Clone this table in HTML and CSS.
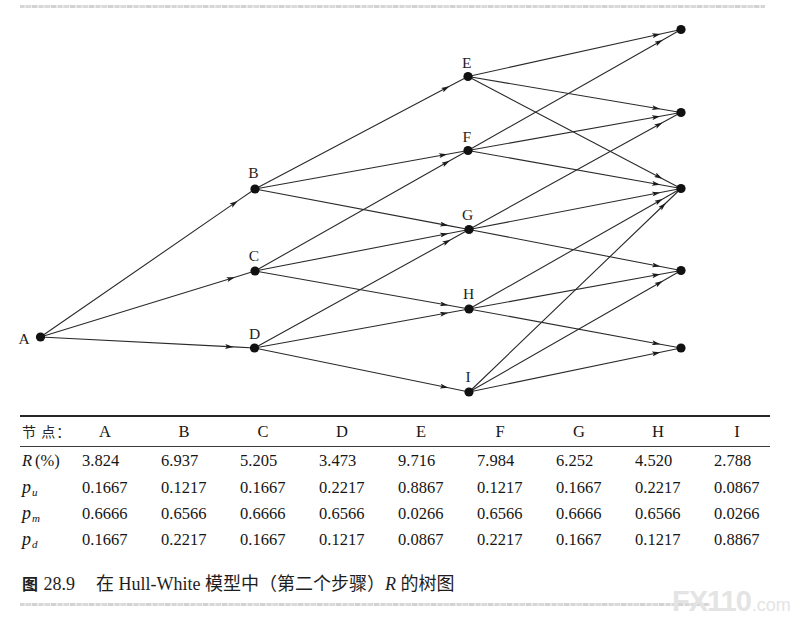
FILE: index.html
```html
<!DOCTYPE html>
<html lang="zh">
<head>
<meta charset="utf-8">
<title>Hull-White 树图</title>
<link rel="stylesheet" href="styles.css">
</head>
<body>
<div class="page">
  <div class="scan scan-top"></div>
  <svg class="tree" viewBox="0 8 809 400" width="809" height="400" xmlns="http://www.w3.org/2000/svg">
    <defs>
      <marker id="ah" viewBox="0 0 10 6" refX="10" refY="3" markerWidth="10" markerHeight="5" markerUnits="userSpaceOnUse" orient="auto">
        <path d="M0,0 L10,3 L0,6 L2.2,3 Z" fill="#1c1c1c"/>
      </marker>
    </defs>
    <g class="edges">
      <polyline points="40.5,337 237.7,200.9 255,189"/>
      <polyline points="40.5,337 234.9,277.2 255,271"/>
      <polyline points="40.5,337 233.5,346.9 254.5,348"/>
      <polyline points="255,189 449.4,86.3 468,76.5"/>
      <polyline points="255,189 447.3,154.2 468,150.5"/>
      <polyline points="255,189 448.4,225.6 469,229.5"/>
      <polyline points="255,271 449.7,160.8 468,150.5"/>
      <polyline points="255,271 448.4,233.5 469,229.5"/>
      <polyline points="255,271 448.3,305.3 469,309"/>
      <polyline points="254.5,348 450.6,239.7 469,229.5"/>
      <polyline points="254.5,348 448.3,312.8 469,309"/>
      <polyline points="254.5,348 448.4,387.8 469,392"/>
      <polyline points="468,76.5 660.5,34 681,29.5"/>
      <polyline points="468,76.5 660.3,109 681,112.5"/>
      <polyline points="468,76.5 662.4,178.7 681,188.5"/>
      <polyline points="468,150.5 662.7,39.9 681,29.5"/>
      <polyline points="468,150.5 660.3,116.2 681,112.5"/>
      <polyline points="468,150.5 660.3,184.8 681,188.5"/>
      <polyline points="469,229.5 662.6,122.6 681,112.5"/>
      <polyline points="469,229.5 660.4,192.5 681,188.5"/>
      <polyline points="469,229.5 660.4,266.5 681,270.5"/>
      <polyline points="469,309 662.7,198.9 681,188.5"/>
      <polyline points="469,309 660.3,274.3 681,270.5"/>
      <polyline points="469,309 660.3,344.2 681,348"/>
      <polyline points="469,392 665.9,203 681,188.5"/>
      <polyline points="469,392 662.8,281 681,270.5"/>
      <polyline points="469,392 660.4,352.3 681,348"/>
    </g>
    <g class="nodes">
      <circle cx="40.5" cy="337" r="4.6"/>
      <circle cx="255" cy="189" r="4.6"/>
      <circle cx="255" cy="271" r="4.6"/>
      <circle cx="254.5" cy="348" r="4.6"/>
      <circle cx="468" cy="76.5" r="4.6"/>
      <circle cx="468" cy="150.5" r="4.6"/>
      <circle cx="469" cy="229.5" r="4.6"/>
      <circle cx="469" cy="309" r="4.6"/>
      <circle cx="469" cy="392" r="4.6"/>
      <circle cx="681" cy="29.5" r="4.6"/>
      <circle cx="681" cy="112.5" r="4.6"/>
      <circle cx="681" cy="188.5" r="4.6"/>
      <circle cx="681" cy="270.5" r="4.6"/>
      <circle cx="681" cy="348" r="4.6"/>
    </g>
    <g class="labels">
      <text x="24" y="343.5">A</text>
      <text x="253.5" y="177.5">B</text>
      <text x="254" y="260.5">C</text>
      <text x="254.5" y="339">D</text>
      <text x="466.7" y="67.5">E</text>
      <text x="466.7" y="141.5">F</text>
      <text x="467.7" y="219.5">G</text>
      <text x="468.7" y="298.5">H</text>
      <text x="468" y="381.5">I</text>
    </g>
  </svg>

  <section class="params">
    <div class="row head">
      <div class="lab cjk">节&nbsp;点：</div>
      <div class="hd"><span>A</span></div>
      <div class="hd"><span>B</span></div>
      <div class="hd"><span>C</span></div>
      <div class="hd"><span>D</span></div>
      <div class="hd"><span>E</span></div>
      <div class="hd"><span>F</span></div>
      <div class="hd"><span>G</span></div>
      <div class="hd"><span>H</span></div>
      <div class="hd"><span>I</span></div>
    </div>
    <div class="row">
      <div class="lab"><i>R</i><span class="pct">(%)</span></div>
      <div>3.824</div><div>6.937</div><div>5.205</div><div>3.473</div><div>9.716</div><div>7.984</div><div>6.252</div><div>4.520</div><div>2.788</div>
    </div>
    <div class="row">
      <div class="lab"><i class="p">p</i><sub>u</sub></div>
      <div>0.1667</div><div>0.1217</div><div>0.1667</div><div>0.2217</div><div>0.8867</div><div>0.1217</div><div>0.1667</div><div>0.2217</div><div>0.0867</div>
    </div>
    <div class="row">
      <div class="lab"><i class="p">p</i><sub>m</sub></div>
      <div>0.6666</div><div>0.6566</div><div>0.6666</div><div>0.6566</div><div>0.0266</div><div>0.6566</div><div>0.6666</div><div>0.6566</div><div>0.0266</div>
    </div>
    <div class="row">
      <div class="lab"><i class="p">p</i><sub>d</sub></div>
      <div>0.1667</div><div>0.2217</div><div>0.1667</div><div>0.1217</div><div>0.0867</div><div>0.2217</div><div>0.1667</div><div>0.1217</div><div>0.8867</div>
    </div>
  </section>

  <p class="caption"><b class="fig">图</b> 28.9<span class="gap"></span>在 Hull-White 模型中（第二个步骤）<i>R</i> 的树图</p>
  <div class="scan scan-bottom"></div>

  <div class="watermark"><span class="wm-big">FX110</span><span class="wm-small">.com</span></div>
</div>
</body>
</html>
```

FILE: styles.css
```css
html, body {
  margin: 0;
  padding: 0;
  background: #ffffff;
}

.page {
  position: relative;
  width: 809px;
  height: 627px;
  overflow: hidden;
  background: #ffffff;
  color: #161616;
  font-family: "Liberation Serif", "Noto Sans CJK SC", serif;
}

.scan {
  height: 3px;
  margin-left: 20px;
  background: repeating-linear-gradient(90deg, #d6d6d6 0 4px, #e6e6e6 4px 6px, #dadada 6px 11px, #f0f0f0 11px 12px, #d2d2d2 12px 17px, #e9e9e9 17px 19px);
  filter: blur(0.6px);
}

.scan-top {
  margin-top: 5px;
  width: 745px;
}

.scan-bottom {
  margin-top: 9px;
  width: 690px;
}

.tree {
  display: block;
}

.edges polyline {
  fill: none;
  stroke: #2a2a2a;
  stroke-width: 1.1;
  marker-mid: url(#ah);
}

.nodes circle {
  fill: #111111;
}

.labels text {
  font-family: "Liberation Serif", serif;
  font-size: 15.5px;
  fill: #1e1e1e;
  text-anchor: middle;
}

.params {
  margin: 7px 0 0 20px;
  width: 750px;
  border-top: 2px solid #262626;
  font-size: 16.5px;
}

.row {
  display: grid;
  grid-template-columns: 62px repeat(8, 79px) 56px;
  height: 26px;
  align-items: center;
  line-height: 26px;
}

.row.head {
  height: 29px;
  line-height: 29px;
  border-bottom: 1px solid #3a3a3a;
  margin-bottom: 1px;
}

.hd span {
  display: block;
  width: 46px;
  text-align: center;
}

.lab {
  padding-left: 2px;
  white-space: nowrap;
}

.lab.cjk {
  font-family: "Noto Sans CJK SC", sans-serif;
  font-size: 14px;
  letter-spacing: 1px;
  color: #262626;
}

.lab i {
  font-style: italic;
}

.lab .pct {
  margin-left: 3px;
}

.lab .p {
  font-size: 18px;
}

.lab sub {
  font-style: italic;
  font-size: 11px;
  vertical-align: -3px;
  line-height: 0;
  margin-left: 1px;
}

.caption {
  margin: 20px 0 0 22px;
  height: 22px;
  line-height: 22px;
  font-size: 18px;
  color: #1e1e1e;
  white-space: nowrap;
}

.caption .fig {
  font-family: "Noto Sans CJK SC", sans-serif;
  font-weight: 700;
  font-size: 16px;
  margin-right: 1px;
}

.caption .gap {
  display: inline-block;
  width: 21px;
}

.caption i {
  font-style: italic;
}

.watermark {
  position: absolute;
  left: 672px;
  top: 586px;
  color: #e4e4e4;
  font-family: "Liberation Sans", Arial, sans-serif;
  white-space: nowrap;
  line-height: 30px;
}

.wm-big {
  font-size: 29px;
  font-weight: 700;
  letter-spacing: -1px;
}

.wm-small {
  font-size: 18px;
  margin-left: 1px;
}
```
